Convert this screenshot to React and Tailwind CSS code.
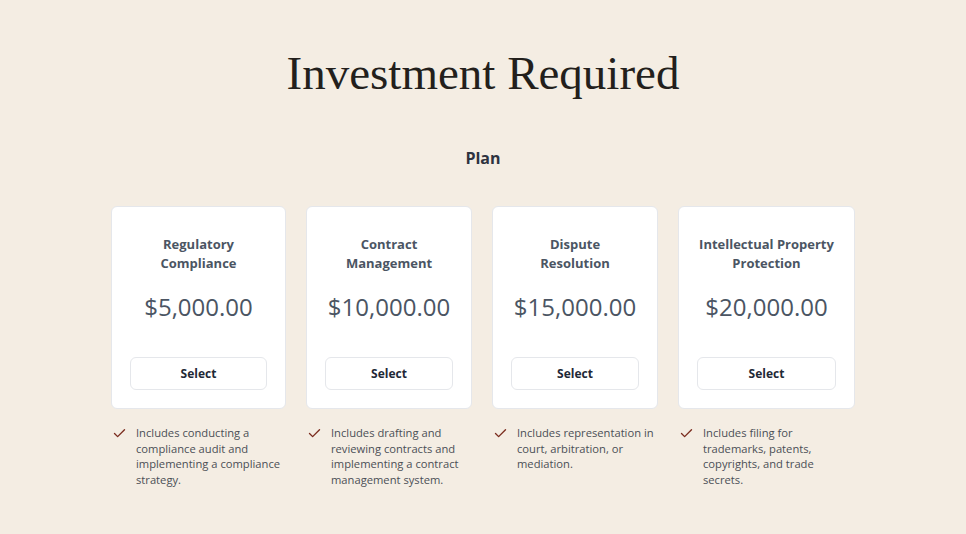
import { Check } from 'lucide-react';

const PLANS = [
  {
    name: ['Regulatory', 'Compliance'],
    price: '$5,000.00',
    width: 'w-[175px]',
    textWidth: 'max-w-[151px]',
    feature: 'Includes conducting a compliance audit and implementing a compliance strategy.',
  },
  {
    name: ['Contract', 'Management'],
    price: '$10,000.00',
    width: 'w-[166px]',
    textWidth: 'max-w-[142px]',
    feature: 'Includes drafting and reviewing contracts and implementing a contract management system.',
  },
  {
    name: ['Dispute', 'Resolution'],
    price: '$15,000.00',
    width: 'w-[166px]',
    textWidth: 'max-w-[142px]',
    feature: 'Includes representation in court, arbitration, or mediation.',
  },
  {
    name: ['Intellectual Property', 'Protection'],
    price: '$20,000.00',
    width: 'w-[177px]',
    textWidth: 'max-w-[138px]',
    feature: 'Includes filing for trademarks, patents, copyrights, and trade secrets.',
  },
];

function PlanCard({ plan }) {
  return (
    <div className={`${plan.width} flex flex-col`}>
      <div className="bg-white rounded-md border border-[#e5e7eb] px-[18px] pt-[28px] pb-[18px] flex flex-col items-center">
        <h3 className="text-[13px] leading-[19px] font-bold text-[#4b5563] text-center">
          {plan.name[0]}
          <br />
          {plan.name[1]}
        </h3>
        <p className="mt-[18px] text-[24px] leading-[32px] text-[#4b5563]">{plan.price}</p>
        <button className="mt-[34px] w-full h-[33px] rounded-md border border-[#e5e7eb] bg-white text-[12px] font-bold text-[#1f2937]">
          Select
        </button>
      </div>
      <div className="mt-[16px] flex items-start gap-[9px] pl-[1px]">
        <Check className="w-[15px] h-[15px] mt-[1px] shrink-0 text-[#7b2d1f]" strokeWidth={2.2} />
        <p className={`${plan.textWidth} text-[11.2px] leading-[15.7px] text-[#4b4f56]`}>{plan.feature}</p>
      </div>
    </div>
  );
}

export default function App() {
  return (
    <div
      className="min-h-[534px] bg-[#f4ede3] pt-[45px] flex flex-col items-center"
      style={{ fontFamily: '"Open Sans", sans-serif' }}
    >
      <h1
        className="text-[47px] leading-[56px] text-[#231f1c]"
        style={{ fontFamily: '"Liberation Serif", serif' }}
      >
        Investment Required
      </h1>
      <h2 className="mt-[45px] text-[16px] leading-[24px] font-bold text-[#2d3340]">Plan</h2>
      <div className="mt-[36px] flex items-start gap-5">
        {PLANS.map((p) => (
          <PlanCard key={p.price} plan={p} />
        ))}
      </div>
    </div>
  );
}
